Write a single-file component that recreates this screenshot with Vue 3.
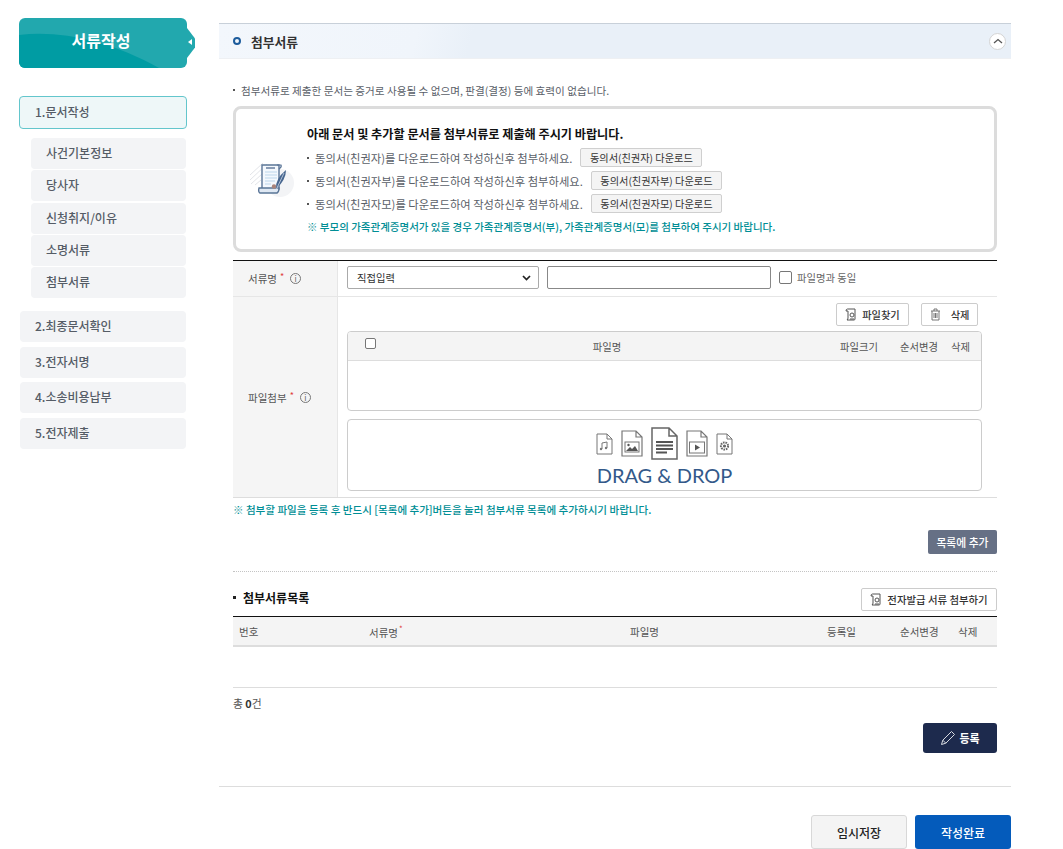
<template>
  <div class="page">
    <aside class="side">
      <div class="side-title">
        <svg class="side-wave" viewBox="0 0 168 50" preserveAspectRatio="none">
          <path d="M0 17 C40 12 90 22 140 50 L0 50 Z" fill="#009ca3" />
        </svg>
        <span>서류작성</span>
        <i class="side-notch"></i>
      </div>
      <div class="step active">1.문서작성</div>
      <ul class="sub">
        <li v-for="item in subItems" :key="item">{{ item }}</li>
      </ul>
      <div class="step" v-for="item in steps" :key="item">{{ item }}</div>
    </aside>

    <main class="main">
      <div class="sec-head">
        <i class="ring"></i>
        <h2>첨부서류</h2>
        <button class="fold">
          <svg width="10" height="6" viewBox="0 0 10 6"><path d="M1 5 L5 1.5 L9 5" fill="none" stroke="#555" stroke-width="1.3" /></svg>
        </button>
      </div>

      <div class="body">
        <p class="note"><i class="dot"></i>첨부서류로 제출한 문서는 증거로 사용될 수 없으며, 판결(결정) 등에 효력이 없습니다.</p>

        <div class="guide">
          <div class="guide-icon">
            <svg width="50" height="50" viewBox="0 0 50 50">
              <circle cx="30" cy="30" r="14" fill="#f3f4f6" />
              <path d="M0 22 L13 10 M0 27 L17 11 M1 31 L12 21 M5 32 L11 27" stroke="#e2e4e8" stroke-width="1" />
              <path d="M12 12 H29 V36 H12 Z" fill="#f4f8fd" stroke="#5a7597" stroke-width="1.4" />
              <path d="M27 12 H31 Q32 14 29 16" fill="none" stroke="#5a7597" stroke-width="1.2" />
              <path d="M16 15 H25" stroke="#8a9cb5" stroke-width="2" />
              <path d="M15 19 H27 M15 22 H27 M15 25 H27 M15 28 H25 M15 31 H21" stroke="#bcd5ec" stroke-width="1.2" />
              <path d="M9 35 H29 Q29 39 27 40 H10 Q8 39 9 35 Z" fill="#dfe8f3" stroke="#5a7597" stroke-width="1.4" />
              <circle cx="24" cy="33.5" r="2.2" fill="#a9837a" />
              <path d="M36 17 Q36 27 26 36 Q25 26 36 17 Z" fill="#47668f" />
              <path d="M34 20 L26 37" stroke="#dfe8f3" stroke-width="0.7" />
            </svg>
          </div>
          <div class="guide-text">
            <strong>아래 문서 및 추가할 문서를 첨부서류로 제출해 주시기 바랍니다.</strong>
            <div class="guide-row" v-for="row in guideRows" :key="row.who">
              <i class="dot"></i>
              <span>동의서({{ row.who }})를 다운로드하여 작성하신후 첨부하세요.</span>
              <button class="btn-down">동의서({{ row.who }}) 다운로드</button>
            </div>
            <p class="teal">※ 부모의 가족관계증명서가 있을 경우 가족관계증명서(부), 가족관계증명서(모)를 첨부하여 주시기 바랍니다.</p>
          </div>
        </div>

        <div class="form">
          <div class="f-row name-row">
            <div class="f-th">서류명<em>*</em><i class="info">i</i></div>
            <div class="f-td name-td">
              <div class="select">직접입력
                <svg width="9" height="6" viewBox="0 0 9 6"><path d="M1 1 L4.5 4.6 L8 1" fill="none" stroke="#222" stroke-width="1.7" /></svg>
              </div>
              <input class="text-input" type="text" />
              <i class="check"></i>
              <span class="same">파일명과 동일</span>
            </div>
          </div>
          <div class="f-row file-row">
            <div class="f-th">파일첨부<em>*</em><i class="info">i</i></div>
            <div class="f-td file-td">
              <div class="file-btns">
                <button class="btn-line find">
                  <svg width="13" height="13" viewBox="0 0 13 13"><path d="M2.5 1 H10 V11 Q10 12 9 12 H2 Q3 11 3 10 V3 H1 Q1 1 2.5 1 Z" fill="none" stroke="#555" stroke-width="1" /><circle cx="7" cy="7" r="2" fill="none" stroke="#555" /><path d="M5 11 H9" stroke="#555" /></svg>
                  파일찾기
                </button>
                <button class="btn-line del">
                  <svg width="11" height="13" viewBox="0 0 11 13"><path d="M1 3 H10 M4 3 V1 H7 V3 M2 3 V12 H9 V3 M4 5 V10 M5.5 5 V10 M7 5 V10" fill="none" stroke="#666" stroke-width="0.9" /></svg>
                  삭제
                </button>
              </div>
              <div class="file-table">
                <div class="file-head">
                  <span class="col-check"><i class="check small"></i></span>
                  <span class="col-name">파일명</span>
                  <span class="col-size">파일크기</span>
                  <span class="col-order">순서변경</span>
                  <span class="col-del">삭제</span>
                </div>
                <div class="file-empty"></div>
              </div>
              <div class="drop">
                <div class="drop-icons">
                  <svg width="17" height="22" viewBox="0 0 17 22"><path d="M1 1 H11 L16 6 V21 H1 Z M11 1 V6 H16" fill="#fff" stroke="#777" /><path d="M6 16 V10 L11 9 V15" fill="none" stroke="#777" /><circle cx="5" cy="16" r="1.2" fill="#777" /><circle cx="10" cy="15" r="1.2" fill="#777" /></svg>
                  <svg width="22" height="27" viewBox="0 0 22 27"><path d="M1 1 H15 L21 7 V26 H1 Z M15 1 V7 H21" fill="#fff" stroke="#777" stroke-width="1.2" /><rect x="4" y="12" width="14" height="10" fill="#fff" stroke="#777" /><circle cx="7.5" cy="15" r="1.2" fill="#555" /><path d="M5 21 L9 17 L11 19 L14 16 L17 21 Z" fill="#555" /></svg>
                  <svg width="27" height="33" viewBox="0 0 27 33"><path d="M1 1 H18 L26 9 V32 H1 Z M18 1 V9 H26" fill="#fff" stroke="#666" stroke-width="1.5" /><path d="M5 15 H22 M5 18.5 H22 M5 22 H22 M5 25.5 H16" stroke="#555" stroke-width="2" /></svg>
                  <svg width="22" height="27" viewBox="0 0 22 27"><path d="M1 1 H15 L21 7 V26 H1 Z M15 1 V7 H21" fill="#fff" stroke="#777" stroke-width="1.2" /><rect x="3.5" y="12" width="15" height="11" fill="#fff" stroke="#777" /><path d="M9 14.5 L14 17.5 L9 20.5 Z" fill="#555" /></svg>
                  <svg width="17" height="22" viewBox="0 0 17 22"><path d="M1 1 H11 L16 6 V21 H1 Z M11 1 V6 H16" fill="#fff" stroke="#777" /><circle cx="8.5" cy="13" r="3.6" fill="none" stroke="#666" stroke-width="2" stroke-dasharray="1.6 0.9" /><circle cx="8.5" cy="13" r="1.6" fill="#666" /></svg>
                </div>
                <div class="drop-text">DRAG &amp; DROP</div>
              </div>
            </div>
          </div>
        </div>

        <p class="teal warn">※ 첨부할 파일을 등록 후 반드시 [목록에 추가]버튼을 눌러 첨부서류 목록에 추가하시기 바랍니다.</p>
        <div class="add-wrap"><button class="btn-add">목록에 추가</button></div>
        <div class="dotted"></div>

        <div class="list-head">
          <h3><i class="dot dark"></i>첨부서류목록</h3>
          <button class="btn-line issue">
            <svg width="13" height="13" viewBox="0 0 13 13"><path d="M2.5 1 H10 V11 Q10 12 9 12 H2 Q3 11 3 10 V3 H1 Q1 1 2.5 1 Z" fill="none" stroke="#555" stroke-width="1" /><circle cx="7" cy="7" r="2" fill="none" stroke="#555" /><path d="M5 11 H9" stroke="#555" /></svg>
            전자발급 서류 첨부하기
          </button>
        </div>
        <div class="list-table">
          <span class="l-no">번호</span>
          <span class="l-type">서류명<em>*</em></span>
          <span class="l-file">파일명</span>
          <span class="l-date">등록일</span>
          <span class="l-order">순서변경</span>
          <span class="l-del">삭제</span>
        </div>
        <div class="list-empty"></div>
        <p class="total">총 <b>0</b>건</p>
        <div class="reg-wrap">
          <button class="btn-reg">
            <svg width="16" height="16" viewBox="0 0 16 16"><path d="M1.5 14.5 L2.8 10.2 L11.5 1.5 L14.5 4.5 L5.8 13.2 Z M2.8 10.2 L5.8 13.2" fill="none" stroke="#d8dbe2" stroke-width="1" /></svg>
            등록
          </button>
        </div>
      </div>

      <div class="foot">
        <button class="btn-temp">임시저장</button>
        <button class="btn-done">작성완료</button>
      </div>
    </main>
  </div>
</template>

<script setup>
const subItems = ['사건기본정보', '당사자', '신청취지/이유', '소명서류', '첨부서류']
const steps = ['2.최종문서확인', '3.전자서명', '4.소송비용납부', '5.전자제출']
const guideRows = [{ who: '친권자' }, { who: '친권자부' }, { who: '친권자모' }]
</script>

<style>
html, body { margin: 0; background: #fff; }
</style>

<style scoped>
.page {
  display: flex;
  width: 1063px;
  height: 849px;
  overflow: hidden;
  font-family: "Noto Sans CJK KR", "Noto Sans", sans-serif;
  font-size: 11px;
  color: #555;
}
button { font-family: inherit; cursor: pointer; }
p, h2, h3, ul { margin: 0; padding: 0; }
i, em { font-style: normal; }

.side { width: 168px; margin-left: 19px; padding-top: 18px; flex-shrink: 0; }
.side-title {
  position: relative;
  height: 50px;
  background: #22a8ae;
  border-radius: 6px;
  display: flex;
  align-items: center;
  justify-content: center;
  color: #fff;
  font-size: 16px;
  font-weight: 700;
  margin-bottom: 28px;
}
.side-title span { position: relative; top: -3px; left: -2px; }
.side-wave { position: absolute; inset: 0; width: 100%; height: 100%; border-radius: 6px; }
.side-notch {
  position: absolute;
  right: -8px;
  top: 10px;
  width: 16px;
  height: 30px;
  background: #22a8ae;
  clip-path: polygon(50% 0, 100% 35%, 100% 65%, 50% 100%, 0 100%, 0 0);
}
.side-notch::after {
  content: "";
  position: absolute;
  left: 9px;
  top: 11px;
  border: 3.5px solid transparent;
  border-right: 4px solid #fff;
  border-left: 0;
}
.step {
  height: 31px;
  line-height: 29px;
  margin: 0 1px 4.67px 1px;
  padding-left: 15px;
  background: #f3f4f6;
  border-radius: 4px;
  font-size: 12px;
  font-weight: 500;
  color: #555c66;
}
.step.active {
  height: 33px;
  line-height: 29px;
  margin: 0 0 9px;
  padding-left: 15px;
  box-sizing: border-box;
  background: #eef7f8;
  border: 1px solid #63c6cc;
  font-weight: 500;
}
.sub { list-style: none; margin: 0 1px 13px 12px; }
.sub li {
  height: 31px;
  line-height: 29px;
  margin-bottom: 1.25px;
  padding-left: 15px;
  background: #f3f4f6;
  border-radius: 4px;
  font-size: 12px;
  font-weight: 500;
  color: #555c66;
}

.main { width: 792px; margin-left: 32px; padding-top: 23px; flex-shrink: 0; }
.sec-head {
  display: flex;
  align-items: center;
  height: 34px;
  padding: 0 5px 0 14px;
  border-top: 1px solid #c8d0d9;
  border-bottom: 1px solid #eef0f3;
  background: linear-gradient(105deg, #f3f7fc 0, #f0f5fb 25%, #e9f0f8 32%, #e9f0f8 100%);
}
.ring {
  width: 8px;
  height: 8px;
  box-sizing: border-box;
  border: 2.5px solid #1d5c9c;
  border-radius: 50%;
  margin-right: 10px;
}
.sec-head h2 { font-size: 12.8px; font-weight: 700; color: #333; flex: 1; }
.fold {
  width: 17px;
  height: 17px;
  padding: 0;
  display: flex;
  align-items: center;
  justify-content: center;
  background: #fff;
  border: 1px solid #d4d4d4;
  border-radius: 50%;
}
.body { padding: 0 14px; }
.note {
  display: flex;
  align-items: center;
  height: 16px;
  margin-top: 23px;
  font-size: 10.6px;
  color: #5a6068;
}
.dot {
  display: inline-block;
  width: 2px;
  height: 2px;
  background: #555;
  margin-right: 6px;
  flex-shrink: 0;
}
.guide {
  display: flex;
  box-sizing: border-box;
  height: 146px;
  margin-top: 8px;
  border: 3px solid #dcdcdc;
  border-radius: 8px;
}
.guide-icon { width: 71px; padding: 44px 0 0 14px; box-sizing: border-box; }
.guide-text { padding-top: 15px; }
.guide-text strong { display: block; height: 19px; line-height: 19px; font-size: 12.15px; font-weight: 700; color: #111; margin-bottom: 3px; }
.guide-row { display: flex; align-items: center; height: 23px; font-size: 11.3px; color: #5a6068; }
.guide-row .dot { margin-right: 6px; }
.btn-down {
  height: 19px;
  margin-left: 8px;
  padding: 0 8.5px;
  background: #f4f4f4;
  border: 1px solid #cfcfcf;
  border-radius: 2px;
  font-size: 10.2px;
  color: #333;
}
.teal { color: #008e95; font-size: 10.5px; font-weight: 500; }
.guide-text .teal { margin-top: 4px; line-height: 16px; }

.form { margin-top: 8px; border-top: 1px solid #111; border-bottom: 1px solid #ddd; }
.f-row { display: flex; }
.name-row { height: 35px; border-bottom: 1px solid #e6e6e6; }
.file-row { height: 200px; }
.f-th {
  width: 105px;
  flex-shrink: 0;
  display: flex;
  align-items: center;
  padding-left: 15px;
  box-sizing: border-box;
  background: #f5f5f5;
  border-right: 1px solid #e6e6e6;
  font-size: 10.5px;
  color: #555;
}
.f-th em { color: #e0403c; font-size: 9px; margin: -4px 0 0 3px; }
.info {
  width: 11px;
  height: 11px;
  box-sizing: border-box;
  margin-left: 6px;
  border: 1px solid #777;
  border-radius: 50%;
  font-size: 8px;
  line-height: 9px;
  text-align: center;
  color: #666;
}
.f-td { flex: 1; padding: 0 15px 0 9px; }
.name-td { display: flex; align-items: center; padding-bottom: 2px; }
.select {
  width: 192px;
  height: 23px;
  box-sizing: border-box;
  display: flex;
  align-items: center;
  justify-content: space-between;
  padding: 0 7px 0 9px;
  border: 1px solid #aaa;
  border-radius: 2px;
  font-size: 10.3px;
  color: #333;
}
.text-input {
  width: 224px;
  height: 23px;
  box-sizing: border-box;
  margin-left: 8px;
  border: 1px solid #888;
  border-radius: 2px;
}
.check {
  display: inline-block;
  width: 13px;
  height: 13px;
  box-sizing: border-box;
  margin-left: 8px;
  border: 1px solid #777;
  border-radius: 2px;
  background: #fff;
}
.check.small { width: 11px; height: 11px; margin: 0; }
.same { margin-left: 5px; font-size: 10.3px; color: #666; }
.file-btns { display: flex; justify-content: flex-end; gap: 12px; padding: 6px 4px 0 0; height: 28px; }
.btn-line {
  height: 23px;
  display: inline-flex;
  align-items: center;
  justify-content: center;
  gap: 4px;
  padding: 0;
  background: #fff;
  border: 1px solid #ccc;
  border-radius: 2px;
  font-size: 10.2px;
  font-weight: 500;
  color: #333;
}
.find { width: 73px; }
.del { width: 57px; gap: 10px; }
.file-table { height: 80px; box-sizing: border-box; border: 1px solid #ccc; border-radius: 4px; overflow: hidden; }
.file-head {
  display: flex;
  align-items: center;
  height: 28px;
  background: #f4f4f4;
  border-bottom: 1px solid #ddd;
  font-size: 10.3px;
  color: #555;
}
.col-check { width: 43px; padding-left: 17px; box-sizing: border-box; margin-top: -3px; }
.col-name { flex: 1; text-align: center; padding-right: 17px; }
.col-size { width: 38px; }
.col-order { width: 38px; margin-left: 22px; }
.col-del { width: 20px; margin: 0 10px 0 13px; }
.drop {
  height: 72px;
  box-sizing: border-box;
  margin-top: 8px;
  border: 1px solid #ccc;
  border-radius: 4px;
  text-align: center;
}
.drop-icons { display: flex; align-items: center; justify-content: center; gap: 8px; height: 37px; padding-top: 5px; }
.drop-text {
  font-family: Lato, sans-serif;
  font-size: 20px;
  line-height: 24px;
  color: #33598a;
  margin-top: 1px;
}
.warn { margin-top: 4px; line-height: 16px; font-size: 10.55px; }
.add-wrap { display: flex; justify-content: flex-end; margin-top: 12px; }
.btn-add {
  width: 69px;
  height: 24px;
  padding: 0;
  background: #667085;
  border: 0;
  border-radius: 2px;
  color: #fff;
  font-size: 10.8px;
  font-weight: 500;
}
.dotted { margin-top: 17px; border-top: 1px dotted #c4c4c4; }
.list-head { display: flex; justify-content: space-between; align-items: center; height: 24px; margin-top: 15px; }
.list-head h3 { display: flex; align-items: center; font-size: 12px; font-weight: 700; color: #111; margin-top: -3px; }
.dark { background: #222; width: 3px; height: 3px; margin-right: 7px; }
.issue { width: 136px; font-size: 10.4px; }
.list-table {
  display: flex;
  align-items: center;
  height: 27px;
  padding-top: 1px;
  margin-top: 5px;
  border-top: 1px solid #111;
  border-bottom: 2px solid #ddd;
  background: #f4f4f4;
  font-size: 10.5px;
  color: #555;
}
.l-no { width: 136px; padding-left: 6px; box-sizing: border-box; }
.l-type { width: 261px; }
.l-type em { color: #e0403c; font-size: 8px; vertical-align: 5px; margin-left: 1px; }
.l-file { width: 197px; }
.l-date { width: 73px; }
.l-order { width: 58px; }
.l-del { width: 39px; }
.list-empty { height: 40px; border-bottom: 1px solid #ddd; }
.total { margin-top: 7px; line-height: 16px; font-size: 10.8px; color: #555; }
.total b { color: #333; }
.reg-wrap { display: flex; justify-content: flex-end; margin-top: 12px; }
.btn-reg {
  width: 74px;
  height: 30px;
  display: flex;
  align-items: center;
  justify-content: center;
  gap: 3px;
  padding: 0;
  background: #1d2a4d;
  border: 0;
  border-radius: 3px;
  color: #fff;
  font-size: 11px;
  font-weight: 700;
}
.foot { display: flex; justify-content: flex-end; gap: 8px; margin-top: 33px; padding-top: 28px; border-top: 1px solid #ddd; }
.btn-temp, .btn-done {
  width: 96px;
  height: 34px;
  padding: 0;
  border-radius: 3px;
  font-size: 12px;
  font-weight: 500;
}
.btn-temp { background: #f4f4f4; border: 1px solid #d8d8d8; color: #222; }
.btn-done { background: #045bbb; border: 0; color: #fff; }
</style>
